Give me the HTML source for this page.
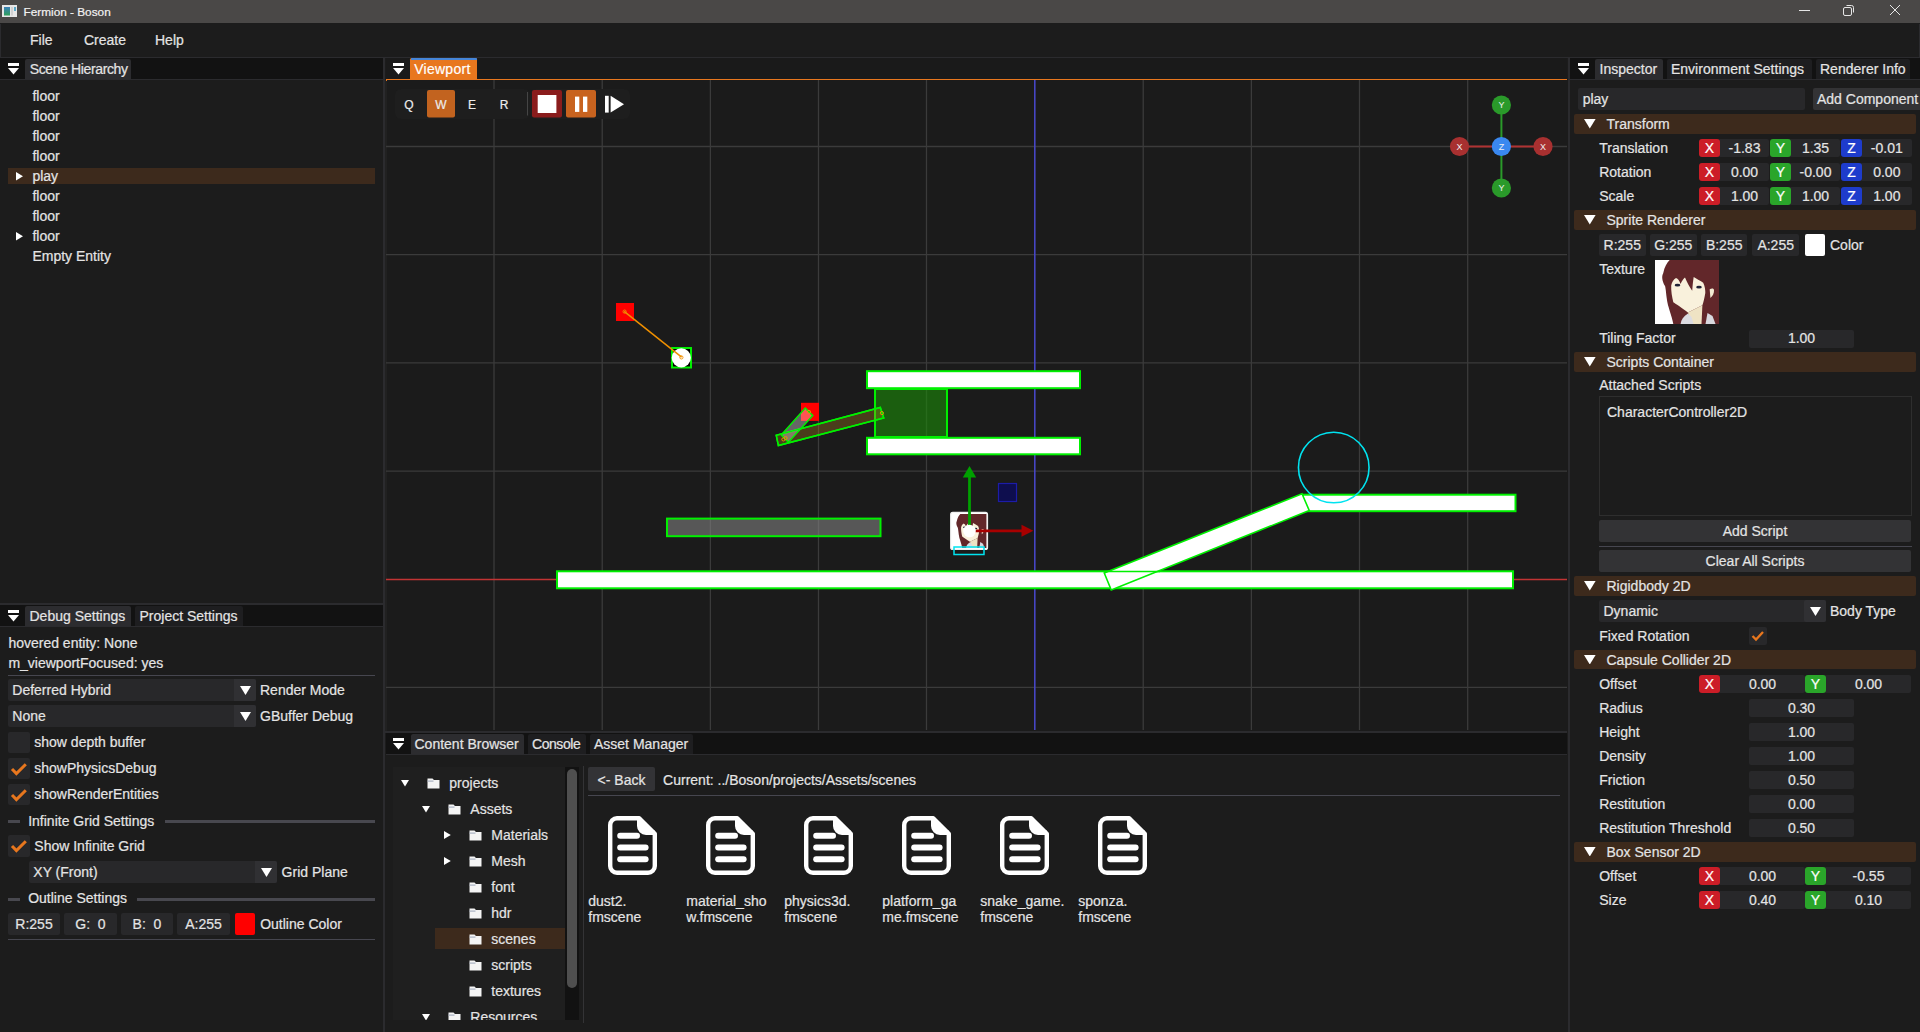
<!DOCTYPE html><html><head><meta charset="utf-8"><style>
html,body{margin:0;padding:0;width:1920px;height:1032px;overflow:hidden;background:#1c1c1c;}
body{position:relative;font-family:"Liberation Sans",sans-serif;font-size:14px;color:#e4e4e4;}
.a{position:absolute;}
.t{position:absolute;white-space:pre;line-height:20px;height:20px;-webkit-text-stroke:0.2px currentColor;}
</style></head><body>

<div class="a" style="left:0px;top:0px;width:1920px;height:23px;background:#4a4847;"></div>
<svg class="a" style="left:2px;top:5px" width="15" height="12"><defs><linearGradient id="ig" x1="0" y1="0" x2="0" y2="1"><stop offset="0" stop-color="#3a7fb8"/><stop offset="1" stop-color="#2fa05a"/></linearGradient></defs><rect x="0" y="0" width="15" height="12" fill="#e6e6e6"/><rect x="2" y="2" width="6" height="8.5" fill="url(#ig)"/><rect x="9" y="2" width="2" height="8.5" fill="#d0d0d0"/><rect x="12" y="2" width="2" height="4" fill="#5aa8c8"/></svg>
<div class="t" style="left:23.5px;top:1.81px;font-size:11.8px;color:#f2f2f2;">Fermion - Boson</div>
<div class="a" style="left:1799px;top:10px;width:11px;height:1px;background:#e6e6e6;"></div>
<svg class="a" style="left:1843px;top:4px" width="13" height="13"><rect x="0.5" y="3.5" width="8" height="8" rx="1.5" fill="none" stroke="#e6e6e6" stroke-width="1"/><path d="M3.5,1.5 h5 a2,2 0 0 1 2,2 v5" fill="none" stroke="#e6e6e6" stroke-width="1"/></svg>
<svg class="a" style="left:1889px;top:4px" width="13" height="13"><path d="M1,1 L11,11 M11,1 L1,11" stroke="#e6e6e6" stroke-width="1"/></svg>
<div class="a" style="left:0px;top:23px;width:1920px;height:34px;background:#1c1c1c;"></div>
<div class="t" style="left:30px;top:30.15px;font-size:14px;">File</div>
<div class="t" style="left:84px;top:30.15px;font-size:14px;">Create</div>
<div class="t" style="left:155px;top:30.15px;font-size:14px;">Help</div>
<div class="a" style="left:0px;top:57px;width:1920px;height:1px;background:#2b2b2e;"></div>
<div class="a" style="left:0px;top:23.5px;width:1px;height:34px;background:#2b2b2e;"></div>
<div class="a" style="left:1918.5px;top:23.5px;width:1.5px;height:34px;background:#2b2b2e;"></div>
<div class="a" style="left:383px;top:58px;width:2px;height:974px;background:#2b2b2e;"></div>
<div class="a" style="left:385px;top:80px;width:2px;height:651px;background:#212121;"></div>
<div class="a" style="left:1568px;top:58px;width:2px;height:974px;background:#2b2b2e;"></div>
<div class="a" style="left:0px;top:58px;width:383px;height:21px;background:#121212;"></div>
<svg class="a" style="left:8px;top:63px" width="11" height="12"><rect x="0" y="0" width="11" height="3" fill="#fff"/><polygon points="0,5 11,5 5.5,11.5" fill="#fff"/></svg>
<div class="a" style="left:25px;top:58.5px;width:105.5px;height:20.5px;background:#2c2c2f;border-radius:2px 2px 0 0"></div>
<div class="t" style="left:29.7px;top:59.35px;font-size:14px;letter-spacing:-0.37px;">Scene Hierarchy</div>
<div class="a" style="left:0px;top:79px;width:383px;height:1px;background:#2b2b2e;"></div>
<div class="t" style="left:32.4px;top:86.15px;font-size:14px;">floor</div>
<div class="t" style="left:32.4px;top:106.15px;font-size:14px;">floor</div>
<div class="t" style="left:32.4px;top:126.15px;font-size:14px;">floor</div>
<div class="t" style="left:32.4px;top:146.15px;font-size:14px;">floor</div>
<div class="a" style="left:8px;top:168px;width:367px;height:16px;background:#3d2a1c;"></div>
<svg class="a" style="left:16px;top:172px" width="7" height="8.5"><polygon points="0,0 7,4.25 0,8.5" fill="#fff"/></svg>
<div class="t" style="left:32.4px;top:166.15px;font-size:14px;">play</div>
<div class="t" style="left:32.4px;top:186.15px;font-size:14px;">floor</div>
<div class="t" style="left:32.4px;top:206.15px;font-size:14px;">floor</div>
<svg class="a" style="left:16px;top:232px" width="7" height="8.5"><polygon points="0,0 7,4.25 0,8.5" fill="#fff"/></svg>
<div class="t" style="left:32.4px;top:226.15px;font-size:14px;">floor</div>
<div class="t" style="left:32.4px;top:246.15px;font-size:14px;">Empty Entity</div>
<div class="a" style="left:0px;top:603px;width:383px;height:2px;background:#2b2b2e;"></div>
<div class="a" style="left:0px;top:605px;width:383px;height:21px;background:#121212;"></div>
<svg class="a" style="left:8px;top:610px" width="11" height="12"><rect x="0" y="0" width="11" height="3" fill="#fff"/><polygon points="0,5 11,5 5.5,11.5" fill="#fff"/></svg>
<div class="a" style="left:25px;top:605.5px;width:105.5px;height:20.5px;background:#2c2c2f;border-radius:2px 2px 0 0"></div>
<div class="t" style="left:29.5px;top:606.15px;font-size:14px;">Debug Settings</div>
<div class="a" style="left:135px;top:605.5px;width:107.6px;height:20.5px;background:#1e1e20;border-radius:2px 2px 0 0"></div>
<div class="t" style="left:139.5px;top:606.15px;font-size:14px;">Project Settings</div>
<div class="a" style="left:0px;top:626px;width:383px;height:1px;background:#2b2b2e;"></div>
<div class="t" style="left:8.4px;top:633.15px;font-size:14px;">hovered entity: None</div>
<div class="t" style="left:8.4px;top:653.15px;font-size:14px;">m_viewportFocused: yes</div>
<div class="a" style="left:8px;top:675px;width:367px;height:1px;background:#46464f;"></div>
<div class="a" style="left:8px;top:679px;width:248px;height:21.5px;background:#28282a;border-radius:2px"></div>
<div class="a" style="left:234px;top:679px;width:22px;height:21.5px;background:#303033;border-radius:0 2px 2px 0"></div>
<svg class="a" style="left:239.5px;top:685.5px" width="11" height="9"><polygon points="0,0 11,0 5.5,9" fill="#fff"/></svg>
<div class="t" style="left:12.3px;top:680.15px;font-size:14px;">Deferred Hybrid</div>
<div class="t" style="left:260px;top:680.15px;font-size:14px;">Render Mode</div>
<div class="a" style="left:8px;top:705.3px;width:248px;height:21.5px;background:#28282a;border-radius:2px"></div>
<div class="a" style="left:234px;top:705.3px;width:22px;height:21.5px;background:#303033;border-radius:0 2px 2px 0"></div>
<svg class="a" style="left:239.5px;top:711.8px" width="11" height="9"><polygon points="0,0 11,0 5.5,9" fill="#fff"/></svg>
<div class="t" style="left:12.3px;top:706.45px;font-size:14px;">None</div>
<div class="t" style="left:260px;top:706.15px;font-size:14px;">GBuffer Debug</div>
<div class="a" style="left:8px;top:731.5px;width:22px;height:21.5px;background:#28282a;border-radius:2px"></div>
<div class="t" style="left:34.3px;top:732.15px;font-size:14px;">show depth buffer</div>
<div class="a" style="left:8px;top:757.5px;width:22px;height:21.5px;background:#28282a;border-radius:2px"></div>
<svg class="a" style="left:8px;top:757.5px" width="22" height="22"><polyline points="4,11 8.4,15.6 17.8,6.2" fill="none" stroke="#e8771e" stroke-width="3"/></svg>
<div class="t" style="left:34.3px;top:758.15px;font-size:14px;">showPhysicsDebug</div>
<div class="a" style="left:8px;top:783.5px;width:22px;height:21.5px;background:#28282a;border-radius:2px"></div>
<svg class="a" style="left:8px;top:783.5px" width="22" height="22"><polyline points="4,11 8.4,15.6 17.8,6.2" fill="none" stroke="#e8771e" stroke-width="3"/></svg>
<div class="t" style="left:34.3px;top:784.15px;font-size:14px;">showRenderEntities</div>
<div class="a" style="left:8px;top:820.0px;width:12px;height:3px;background:#48484f;"></div>
<div class="t" style="left:28.2px;top:810.65px;font-size:14px;">Infinite Grid Settings</div>
<div class="a" style="left:165px;top:820.0px;width:210px;height:3px;background:#48484f;"></div>
<div class="a" style="left:8px;top:835px;width:22px;height:21.5px;background:#28282a;border-radius:2px"></div>
<svg class="a" style="left:8px;top:835px" width="22" height="22"><polyline points="4,11 8.4,15.6 17.8,6.2" fill="none" stroke="#e8771e" stroke-width="3"/></svg>
<div class="t" style="left:34.3px;top:836.15px;font-size:14px;">Show Infinite Grid</div>
<div class="a" style="left:29px;top:861px;width:248px;height:21.5px;background:#28282a;border-radius:2px"></div>
<div class="a" style="left:255px;top:861px;width:22px;height:21.5px;background:#303033;border-radius:0 2px 2px 0"></div>
<svg class="a" style="left:260.5px;top:867.5px" width="11" height="9"><polygon points="0,0 11,0 5.5,9" fill="#fff"/></svg>
<div class="t" style="left:33.3px;top:862.15px;font-size:14px;">XY (Front)</div>
<div class="t" style="left:281.6px;top:862.15px;font-size:14px;">Grid Plane</div>
<div class="a" style="left:8px;top:897.5px;width:12px;height:3px;background:#48484f;"></div>
<div class="t" style="left:28.2px;top:888.15px;font-size:14px;">Outline Settings</div>
<div class="a" style="left:137px;top:897.5px;width:238px;height:3px;background:#48484f;"></div>
<div class="a" style="left:8px;top:913px;width:52px;height:21.5px;background:#28282a;border-radius:2px"></div>
<div class="t" style="left:-166.0px;width:400px;text-align:center;top:914.15px;font-size:14px;">R:255</div>
<div class="a" style="left:64px;top:913px;width:53px;height:21.5px;background:#28282a;border-radius:2px"></div>
<div class="t" style="left:-109.5px;width:400px;text-align:center;top:914.15px;font-size:14px;">G:  0</div>
<div class="a" style="left:121px;top:913px;width:52px;height:21.5px;background:#28282a;border-radius:2px"></div>
<div class="t" style="left:-53.0px;width:400px;text-align:center;top:914.15px;font-size:14px;">B:  0</div>
<div class="a" style="left:177px;top:913px;width:53px;height:21.5px;background:#28282a;border-radius:2px"></div>
<div class="t" style="left:3.5px;width:400px;text-align:center;top:914.15px;font-size:14px;">A:255</div>
<div class="a" style="left:235px;top:913px;width:20px;height:21.5px;background:#ff0000;border-radius:2px"></div>
<div class="t" style="left:260.2px;top:914.15px;font-size:14px;">Outline Color</div>
<div class="a" style="left:8px;top:939px;width:367px;height:1px;background:#46464f;"></div>
<div class="a" style="left:386px;top:58px;width:1181px;height:21px;background:#1a1a1a;"></div>
<svg class="a" style="left:393px;top:63px" width="11" height="12"><rect x="0" y="0" width="11" height="3" fill="#fff"/><polygon points="0,5 11,5 5.5,11.5" fill="#fff"/></svg>
<div class="a" style="left:410px;top:58px;width:67px;height:21.5px;background:#e8771e;border-radius:1.5px 1.5px 0 0"></div>
<div class="a" style="left:410.5px;top:58px;width:66px;height:1.6px;background:#4585d8;border-radius:1px 1px 0 0"></div>
<div class="t" style="left:414.2px;top:59.35px;font-size:14px;color:#fff;letter-spacing:0.27px;">Viewport</div>
<div class="a" style="left:386px;top:79px;width:1181px;height:1.5px;background:#e8771e;"></div>
<div class="a" style="left:387px;top:80px;width:1181px;height:651px;background:#1b1b1b;"></div>
<svg class="a" style="left:386px;top:80px" width="1181" height="650" viewBox="386 80 1181 650"><line x1="494" y1="80" x2="494" y2="730" stroke="#3b3b3b" stroke-width="1.3"/><line x1="602.2" y1="80" x2="602.2" y2="730" stroke="#3b3b3b" stroke-width="1.3"/><line x1="710.4" y1="80" x2="710.4" y2="730" stroke="#3b3b3b" stroke-width="1.3"/><line x1="818.5" y1="80" x2="818.5" y2="730" stroke="#3b3b3b" stroke-width="1.3"/><line x1="926.5" y1="80" x2="926.5" y2="730" stroke="#3b3b3b" stroke-width="1.3"/><line x1="1143.2" y1="80" x2="1143.2" y2="730" stroke="#3b3b3b" stroke-width="1.3"/><line x1="1251.4" y1="80" x2="1251.4" y2="730" stroke="#3b3b3b" stroke-width="1.3"/><line x1="1359.5" y1="80" x2="1359.5" y2="730" stroke="#3b3b3b" stroke-width="1.3"/><line x1="1467.7" y1="80" x2="1467.7" y2="730" stroke="#3b3b3b" stroke-width="1.3"/><line x1="386" y1="146.5" x2="1567" y2="146.5" stroke="#3b3b3b" stroke-width="1.3"/><line x1="386" y1="254.7" x2="1567" y2="254.7" stroke="#3b3b3b" stroke-width="1.3"/><line x1="386" y1="362.9" x2="1567" y2="362.9" stroke="#3b3b3b" stroke-width="1.3"/><line x1="386" y1="471.1" x2="1567" y2="471.1" stroke="#3b3b3b" stroke-width="1.3"/><line x1="386" y1="687.4" x2="1567" y2="687.4" stroke="#3b3b3b" stroke-width="1.3"/><line x1="1034.8" y1="80" x2="1034.8" y2="730" stroke="#4646c4" stroke-width="1.6"/><line x1="386" y1="579.5" x2="1567" y2="579.5" stroke="#c23434" stroke-width="1.6"/><rect x="395" y="89" width="135" height="30" rx="6" fill="#1e1e1e"/><rect x="530" y="89" width="100" height="30" rx="6" fill="#1e1e1e"/><rect x="427" y="90" width="28" height="27.5" rx="2" fill="#c2631f"/><line x1="527.5" y1="92" x2="527.5" y2="115.5" stroke="#454545" stroke-width="1"/><rect x="532" y="90" width="30" height="27.5" rx="2" fill="#8a1c1c"/><rect x="537.7" y="95" width="18.7" height="18" fill="#fff"/><rect x="566" y="90" width="30" height="27.5" rx="2" fill="#c8631f"/><rect x="575" y="96.6" width="4.3" height="15.3" fill="#fff"/><rect x="583" y="96.6" width="4.3" height="15.3" fill="#fff"/><rect x="605" y="95.8" width="3.7" height="16.8" fill="#fff"/><polygon points="610.6,95.8 624,104.2 610.6,112.6" fill="#fff"/><rect x="616" y="303" width="18" height="18" fill="#ff0000"/><rect x="672" y="348" width="19" height="19.5" fill="#000" stroke="#00f000" stroke-width="2"/><circle cx="681.3" cy="357.8" r="9.6" fill="#fff"/><line x1="624.1" y1="311.4" x2="681.6" y2="357.1" stroke="#f09000" stroke-width="1.5"/><rect x="875" y="389" width="72" height="48" fill="rgba(28,140,8,0.6)" stroke="#00f000" stroke-width="2"/><rect x="867" y="371.2" width="213" height="17" fill="#fff" stroke="#00f000" stroke-width="2"/><rect x="867" y="437.8" width="213" height="16.5" fill="#fff" stroke="#00f000" stroke-width="2"/><rect x="801" y="402.8" width="18" height="18.1" fill="#ff0000"/><polygon points="776.25,435.3 778.4,445.6 883.75,418.1 880.3,407.5" fill="rgba(170,132,28,0.33)" stroke="#00f000" stroke-width="1.5"/><polygon points="781.25,435 788.4,442.2 812.8,415.6 805.3,408.1" fill="rgba(255,255,255,0.33)" stroke="#00f000" stroke-width="1.5"/><polygon points="776.25,435.3 778.4,445.6 883.75,418.1 880.3,407.5" fill="none" stroke="#00f000" stroke-width="1.5"/><rect x="667" y="518.6" width="213.5" height="17.6" fill="rgba(128,128,128,0.6)" stroke="#00f000" stroke-width="2"/><circle cx="809" cy="411.9" r="1.6" fill="none" stroke="#f09000" stroke-width="0.9"/><circle cx="881.9" cy="413.1" r="1.6" fill="none" stroke="#f09000" stroke-width="0.9"/><circle cx="785.6" cy="438.1" r="1.6" fill="none" stroke="#f09000" stroke-width="0.9"/><circle cx="783.4" cy="439.4" r="1.6" fill="none" stroke="#f09000" stroke-width="0.9"/><circle cx="624.6" cy="311.6" r="1.6" fill="none" stroke="#f09000" stroke-width="0.9"/><circle cx="681.4" cy="357.4" r="1.6" fill="none" stroke="#f09000" stroke-width="0.9"/><rect x="557" y="571.3" width="956" height="17" fill="#fff" stroke="#00f000" stroke-width="2"/><rect x="1303" y="494.7" width="212.5" height="16.5" fill="#fff" stroke="#00f000" stroke-width="2"/><polygon points="1104.25,573 1111.25,590 1309.25,510.5 1302,493.75" fill="#fff" stroke="#00f000" stroke-width="1.6"/><line x1="1104.5" y1="571.5" x2="1160" y2="571.5" stroke="#00f000" stroke-width="1.6"/><circle cx="1333.75" cy="467.5" r="35.3" fill="none" stroke="#00e3f0" stroke-width="1.6"/><rect x="998.5" y="483.5" width="18" height="18" fill="#0e0e4e" stroke="#1c1ca8" stroke-width="1.2"/><rect x="950.7" y="512.4" width="36.8" height="37" rx="2" fill="#fff" stroke="#f0f0f0" stroke-width="1.2"/><g transform="translate(952.5,514) scale(0.53)"><rect width="64" height="64" fill="#ffffff"/><path d="M14.7,0 H64 V64 H18.3 C17,56 12.5,46 11.8,38.7 C11,32 10.7,28 10,26 C7,21 6.5,16 8.2,13.2 C9.5,7 12,2.5 14.7,0 Z" fill="#62272a"/><path d="M16.2,25.6 C17,22 18.5,19.5 21,18 C23,18.5 24.5,21 25.5,24 C27,21 28.5,18.5 30,17.5 C32,22 34.5,27 37.2,30.7 C37.6,26 38,21 38.7,17 C42,19 45.5,21 48.2,22.7 C49.8,26 50.5,30 50.3,33 C49.5,38 48.5,42 47.4,45.2 L32.9,52.5 C27,48 21,44 18.3,42.3 C17,37 16,31 16.2,25.6 Z" fill="#f9f1dc"/><path d="M32.9,52.5 L47.4,45.2 L46.5,64 L37,64 Z" fill="#efe3c4"/><path d="M25.6,64 C26,59.5 28.5,56.5 33,53.5 L36.5,57 L38.5,64 Z" fill="#dcdce2"/><path d="M52.5,53 L57.5,56 L60.5,64 L50.5,64 Z" fill="#d8d8de"/><path d="M54.7,29.2 C57,28 59,28.3 59,30.5 C59,33 58,36 55.4,38 Z" fill="#f3ead2"/><ellipse cx="22.5" cy="25.2" rx="2.8" ry="1.4" fill="#1e2236"/><ellipse cx="44" cy="27.2" rx="2.8" ry="1.4" fill="#1e2236"/></g><rect x="954" y="547" width="30" height="7.5" fill="none" stroke="#00e3f0" stroke-width="1.5"/><line x1="969.5" y1="476" x2="969.5" y2="530" stroke="#00a000" stroke-width="2.8"/><polygon points="962.8,477.5 976.2,477.5 969.5,466" fill="#00a000"/><line x1="972" y1="530.8" x2="1023" y2="530.8" stroke="#a80000" stroke-width="2.8"/><polygon points="1021.5,524.8 1021.5,536.8 1033.4,530.8" fill="#a80000"/><circle cx="969.5" cy="531" r="6.3" fill="#fff"/><line x1="1501.4" y1="105" x2="1501.4" y2="188" stroke="#2a9a2a" stroke-width="2"/><line x1="1459.5" y1="146.5" x2="1543" y2="146.5" stroke="#b03232" stroke-width="2"/><circle cx="1501.4" cy="105" r="9.6" fill="#2a9a2a"/><text x="1501.4" y="108.3" font-size="9" text-anchor="middle" fill="#f0f0f0" font-family="Liberation Sans">Y</text><circle cx="1501.4" cy="188" r="9.6" fill="#2a9a2a"/><text x="1501.4" y="191.3" font-size="9" text-anchor="middle" fill="#f0f0f0" font-family="Liberation Sans">Y</text><circle cx="1459.5" cy="146.5" r="9.6" fill="#a83030"/><text x="1459.5" y="149.8" font-size="9" text-anchor="middle" fill="#f0f0f0" font-family="Liberation Sans">X</text><circle cx="1543" cy="146.5" r="9.6" fill="#a83030"/><text x="1543" y="149.8" font-size="9" text-anchor="middle" fill="#f0f0f0" font-family="Liberation Sans">X</text><circle cx="1501.4" cy="146.5" r="9.6" fill="#3a88f0"/><text x="1501.4" y="149.8" font-size="9" text-anchor="middle" fill="#f0f0f0" font-family="Liberation Sans">Z</text></svg>
<div class="t" style="left:209px;width:400px;text-align:center;top:94.54px;font-size:12px;color:#ececec;">Q</div>
<div class="t" style="left:241px;width:400px;text-align:center;top:94.54px;font-size:12px;color:#ececec;">W</div>
<div class="t" style="left:272px;width:400px;text-align:center;top:94.54px;font-size:12px;color:#ececec;">E</div>
<div class="t" style="left:304px;width:400px;text-align:center;top:94.54px;font-size:12px;color:#ececec;">R</div>
<div class="a" style="left:383px;top:731px;width:1184px;height:2px;background:#2b2b2e;"></div>
<div class="a" style="left:386px;top:733px;width:1181px;height:21px;background:#121212;"></div>
<svg class="a" style="left:393px;top:738px" width="11" height="12"><rect x="0" y="0" width="11" height="3" fill="#fff"/><polygon points="0,5 11,5 5.5,11.5" fill="#fff"/></svg>
<div class="a" style="left:410.5px;top:733.5px;width:113.5px;height:20.5px;background:#2c2c2f;border-radius:2px 2px 0 0"></div>
<div class="t" style="left:414.5px;top:734.15px;font-size:14px;">Content Browser</div>
<div class="a" style="left:528px;top:733.5px;width:58px;height:20.5px;background:#1e1e20;border-radius:2px 2px 0 0"></div>
<div class="t" style="left:532px;top:734.15px;font-size:14px;letter-spacing:-0.44px;">Console</div>
<div class="a" style="left:590px;top:733.5px;width:102.60000000000002px;height:20.5px;background:#1e1e20;border-radius:2px 2px 0 0"></div>
<div class="t" style="left:594px;top:734.15px;font-size:14px;">Asset Manager</div>
<div class="a" style="left:386px;top:754px;width:1181px;height:1px;background:#2b2b2e;"></div>
<div class="a" style="left:392.5px;top:767px;width:186.5px;height:253px;background:#1f1f1f;overflow:hidden">
<div class="a" style="left:42.5px;top:161.20000000000005px;width:129.5px;height:21.2px;background:#3d2a1c;"></div>
<svg class="a" style="left:8.75px;top:12.799999999999955px" width="8" height="7"><polygon points="0,0 8,0 4,6.5" fill="#fff"/></svg>
<svg class="a" style="left:34.19999999999999px;top:10.799999999999955px" width="13" height="11"><path d="M0.5,0.5 h5 l1.5,1.5 h5.5 v8.5 h-12 z" fill="#f4f4f4"/><rect x="0.5" y="2.5" width="6" height="1.2" fill="#a9b1c2"/></svg>
<div class="t" style="left:56.80000000000001px;top:5.95px">projects</div>
<svg class="a" style="left:29.75px;top:38.799999999999955px" width="8" height="7"><polygon points="0,0 8,0 4,6.5" fill="#fff"/></svg>
<svg class="a" style="left:55.19999999999999px;top:36.799999999999955px" width="13" height="11"><path d="M0.5,0.5 h5 l1.5,1.5 h5.5 v8.5 h-12 z" fill="#f4f4f4"/><rect x="0.5" y="2.5" width="6" height="1.2" fill="#a9b1c2"/></svg>
<div class="t" style="left:77.80000000000001px;top:31.95px">Assets</div>
<svg class="a" style="left:51.25px;top:64.29999999999995px" width="7" height="8"><polygon points="0,0 6.8,4 0,8" fill="#fff"/></svg>
<svg class="a" style="left:76.19999999999999px;top:62.799999999999955px" width="13" height="11"><path d="M0.5,0.5 h5 l1.5,1.5 h5.5 v8.5 h-12 z" fill="#f4f4f4"/><rect x="0.5" y="2.5" width="6" height="1.2" fill="#a9b1c2"/></svg>
<div class="t" style="left:98.80000000000001px;top:57.95px">Materials</div>
<svg class="a" style="left:51.25px;top:90.29999999999995px" width="7" height="8"><polygon points="0,0 6.8,4 0,8" fill="#fff"/></svg>
<svg class="a" style="left:76.19999999999999px;top:88.79999999999995px" width="13" height="11"><path d="M0.5,0.5 h5 l1.5,1.5 h5.5 v8.5 h-12 z" fill="#f4f4f4"/><rect x="0.5" y="2.5" width="6" height="1.2" fill="#a9b1c2"/></svg>
<div class="t" style="left:98.80000000000001px;top:83.95px">Mesh</div>
<svg class="a" style="left:76.19999999999999px;top:114.79999999999995px" width="13" height="11"><path d="M0.5,0.5 h5 l1.5,1.5 h5.5 v8.5 h-12 z" fill="#f4f4f4"/><rect x="0.5" y="2.5" width="6" height="1.2" fill="#a9b1c2"/></svg>
<div class="t" style="left:98.80000000000001px;top:109.95px">font</div>
<svg class="a" style="left:76.19999999999999px;top:140.79999999999995px" width="13" height="11"><path d="M0.5,0.5 h5 l1.5,1.5 h5.5 v8.5 h-12 z" fill="#f4f4f4"/><rect x="0.5" y="2.5" width="6" height="1.2" fill="#a9b1c2"/></svg>
<div class="t" style="left:98.80000000000001px;top:135.95px">hdr</div>
<svg class="a" style="left:76.19999999999999px;top:166.79999999999995px" width="13" height="11"><path d="M0.5,0.5 h5 l1.5,1.5 h5.5 v8.5 h-12 z" fill="#f4f4f4"/><rect x="0.5" y="2.5" width="6" height="1.2" fill="#a9b1c2"/></svg>
<div class="t" style="left:98.80000000000001px;top:161.95px">scenes</div>
<svg class="a" style="left:76.19999999999999px;top:192.79999999999995px" width="13" height="11"><path d="M0.5,0.5 h5 l1.5,1.5 h5.5 v8.5 h-12 z" fill="#f4f4f4"/><rect x="0.5" y="2.5" width="6" height="1.2" fill="#a9b1c2"/></svg>
<div class="t" style="left:98.80000000000001px;top:187.95px">scripts</div>
<svg class="a" style="left:76.19999999999999px;top:218.79999999999995px" width="13" height="11"><path d="M0.5,0.5 h5 l1.5,1.5 h5.5 v8.5 h-12 z" fill="#f4f4f4"/><rect x="0.5" y="2.5" width="6" height="1.2" fill="#a9b1c2"/></svg>
<div class="t" style="left:98.80000000000001px;top:213.95px">textures</div>
<svg class="a" style="left:29.75px;top:246.79999999999995px" width="8" height="7"><polygon points="0,0 8,0 4,6.5" fill="#fff"/></svg>
<svg class="a" style="left:55.19999999999999px;top:244.79999999999995px" width="13" height="11"><path d="M0.5,0.5 h5 l1.5,1.5 h5.5 v8.5 h-12 z" fill="#f4f4f4"/><rect x="0.5" y="2.5" width="6" height="1.2" fill="#a9b1c2"/></svg>
<div class="t" style="left:77.80000000000001px;top:239.95px">Resources</div>
<div class="a" style="left:172.5px;top:0px;width:14px;height:253px;background:#121212"></div>
<div class="a" style="left:174.5px;top:2.2px;width:10px;height:218.8px;background:#4f4f4f;border-radius:5px"></div>
</div>
<div class="a" style="left:583px;top:766px;width:1px;height:257px;background:#333335;"></div>
<div class="a" style="left:588px;top:767px;width:67px;height:23.7px;background:#333336;border-radius:2px"></div>
<div class="t" style="left:421.5px;width:400px;text-align:center;top:769.65px;font-size:14px;">&lt;- Back</div>
<div class="t" style="left:663.1px;top:769.65px;font-size:14px;">Current: ../Boson/projects/Assets/scenes</div>
<div class="a" style="left:588px;top:795px;width:972px;height:1px;background:#46464f;"></div>
<svg class="a" style="left:607.7px;top:816.4px" width="49" height="59" viewBox="0 0 49 59"><path d="M9,2.2 H31.2 L46.8,17.8 V50 A6.8,6.8 0 0 1 40,56.8 H9 A6.8,6.8 0 0 1 2.2,50 V9 A6.8,6.8 0 0 1 9,2.2 Z" fill="none" stroke="#fff" stroke-width="4.4" stroke-linejoin="round"/><path d="M31.2,2.2 V10 A6.8,6.8 0 0 0 38,16.8 H46.8" fill="none" stroke="#fff" stroke-width="4.4"/><path d="M31,2 L47,18 L38,18 A7,7 0 0 1 31,11 Z" fill="#fff"/><line x1="12.2" y1="19.8" x2="29" y2="19.8" stroke="#fff" stroke-width="6" stroke-linecap="round"/><line x1="12.2" y1="31.6" x2="37.6" y2="31.6" stroke="#fff" stroke-width="6" stroke-linecap="round"/><line x1="12.2" y1="43.2" x2="37.6" y2="43.2" stroke="#fff" stroke-width="6" stroke-linecap="round"/></svg>
<div class="t" style="left:588.3px;top:891.15px;font-size:14px;">dust2.</div>
<div class="t" style="left:588.3px;top:907.15px;font-size:14px;">fmscene</div>
<svg class="a" style="left:705.7px;top:816.4px" width="49" height="59" viewBox="0 0 49 59"><path d="M9,2.2 H31.2 L46.8,17.8 V50 A6.8,6.8 0 0 1 40,56.8 H9 A6.8,6.8 0 0 1 2.2,50 V9 A6.8,6.8 0 0 1 9,2.2 Z" fill="none" stroke="#fff" stroke-width="4.4" stroke-linejoin="round"/><path d="M31.2,2.2 V10 A6.8,6.8 0 0 0 38,16.8 H46.8" fill="none" stroke="#fff" stroke-width="4.4"/><path d="M31,2 L47,18 L38,18 A7,7 0 0 1 31,11 Z" fill="#fff"/><line x1="12.2" y1="19.8" x2="29" y2="19.8" stroke="#fff" stroke-width="6" stroke-linecap="round"/><line x1="12.2" y1="31.6" x2="37.6" y2="31.6" stroke="#fff" stroke-width="6" stroke-linecap="round"/><line x1="12.2" y1="43.2" x2="37.6" y2="43.2" stroke="#fff" stroke-width="6" stroke-linecap="round"/></svg>
<div class="t" style="left:686.3px;top:891.15px;font-size:14px;">material_sho</div>
<div class="t" style="left:686.3px;top:907.15px;font-size:14px;">w.fmscene</div>
<svg class="a" style="left:803.7px;top:816.4px" width="49" height="59" viewBox="0 0 49 59"><path d="M9,2.2 H31.2 L46.8,17.8 V50 A6.8,6.8 0 0 1 40,56.8 H9 A6.8,6.8 0 0 1 2.2,50 V9 A6.8,6.8 0 0 1 9,2.2 Z" fill="none" stroke="#fff" stroke-width="4.4" stroke-linejoin="round"/><path d="M31.2,2.2 V10 A6.8,6.8 0 0 0 38,16.8 H46.8" fill="none" stroke="#fff" stroke-width="4.4"/><path d="M31,2 L47,18 L38,18 A7,7 0 0 1 31,11 Z" fill="#fff"/><line x1="12.2" y1="19.8" x2="29" y2="19.8" stroke="#fff" stroke-width="6" stroke-linecap="round"/><line x1="12.2" y1="31.6" x2="37.6" y2="31.6" stroke="#fff" stroke-width="6" stroke-linecap="round"/><line x1="12.2" y1="43.2" x2="37.6" y2="43.2" stroke="#fff" stroke-width="6" stroke-linecap="round"/></svg>
<div class="t" style="left:784.3px;top:891.15px;font-size:14px;">physics3d.</div>
<div class="t" style="left:784.3px;top:907.15px;font-size:14px;">fmscene</div>
<svg class="a" style="left:901.7px;top:816.4px" width="49" height="59" viewBox="0 0 49 59"><path d="M9,2.2 H31.2 L46.8,17.8 V50 A6.8,6.8 0 0 1 40,56.8 H9 A6.8,6.8 0 0 1 2.2,50 V9 A6.8,6.8 0 0 1 9,2.2 Z" fill="none" stroke="#fff" stroke-width="4.4" stroke-linejoin="round"/><path d="M31.2,2.2 V10 A6.8,6.8 0 0 0 38,16.8 H46.8" fill="none" stroke="#fff" stroke-width="4.4"/><path d="M31,2 L47,18 L38,18 A7,7 0 0 1 31,11 Z" fill="#fff"/><line x1="12.2" y1="19.8" x2="29" y2="19.8" stroke="#fff" stroke-width="6" stroke-linecap="round"/><line x1="12.2" y1="31.6" x2="37.6" y2="31.6" stroke="#fff" stroke-width="6" stroke-linecap="round"/><line x1="12.2" y1="43.2" x2="37.6" y2="43.2" stroke="#fff" stroke-width="6" stroke-linecap="round"/></svg>
<div class="t" style="left:882.3px;top:891.15px;font-size:14px;">platform_ga</div>
<div class="t" style="left:882.3px;top:907.15px;font-size:14px;">me.fmscene</div>
<svg class="a" style="left:999.7px;top:816.4px" width="49" height="59" viewBox="0 0 49 59"><path d="M9,2.2 H31.2 L46.8,17.8 V50 A6.8,6.8 0 0 1 40,56.8 H9 A6.8,6.8 0 0 1 2.2,50 V9 A6.8,6.8 0 0 1 9,2.2 Z" fill="none" stroke="#fff" stroke-width="4.4" stroke-linejoin="round"/><path d="M31.2,2.2 V10 A6.8,6.8 0 0 0 38,16.8 H46.8" fill="none" stroke="#fff" stroke-width="4.4"/><path d="M31,2 L47,18 L38,18 A7,7 0 0 1 31,11 Z" fill="#fff"/><line x1="12.2" y1="19.8" x2="29" y2="19.8" stroke="#fff" stroke-width="6" stroke-linecap="round"/><line x1="12.2" y1="31.6" x2="37.6" y2="31.6" stroke="#fff" stroke-width="6" stroke-linecap="round"/><line x1="12.2" y1="43.2" x2="37.6" y2="43.2" stroke="#fff" stroke-width="6" stroke-linecap="round"/></svg>
<div class="t" style="left:980.3px;top:891.15px;font-size:14px;">snake_game.</div>
<div class="t" style="left:980.3px;top:907.15px;font-size:14px;">fmscene</div>
<svg class="a" style="left:1097.7px;top:816.4px" width="49" height="59" viewBox="0 0 49 59"><path d="M9,2.2 H31.2 L46.8,17.8 V50 A6.8,6.8 0 0 1 40,56.8 H9 A6.8,6.8 0 0 1 2.2,50 V9 A6.8,6.8 0 0 1 9,2.2 Z" fill="none" stroke="#fff" stroke-width="4.4" stroke-linejoin="round"/><path d="M31.2,2.2 V10 A6.8,6.8 0 0 0 38,16.8 H46.8" fill="none" stroke="#fff" stroke-width="4.4"/><path d="M31,2 L47,18 L38,18 A7,7 0 0 1 31,11 Z" fill="#fff"/><line x1="12.2" y1="19.8" x2="29" y2="19.8" stroke="#fff" stroke-width="6" stroke-linecap="round"/><line x1="12.2" y1="31.6" x2="37.6" y2="31.6" stroke="#fff" stroke-width="6" stroke-linecap="round"/><line x1="12.2" y1="43.2" x2="37.6" y2="43.2" stroke="#fff" stroke-width="6" stroke-linecap="round"/></svg>
<div class="t" style="left:1078.3px;top:891.15px;font-size:14px;">sponza.</div>
<div class="t" style="left:1078.3px;top:907.15px;font-size:14px;">fmscene</div>
<div class="a" style="left:1570px;top:58px;width:350px;height:21px;background:#121212;"></div>
<svg class="a" style="left:1578px;top:63px" width="11" height="12"><rect x="0" y="0" width="11" height="3" fill="#fff"/><polygon points="0,5 11,5 5.5,11.5" fill="#fff"/></svg>
<div class="a" style="left:1595.2px;top:58.5px;width:67.5px;height:20.5px;background:#2c2c2f;border-radius:2px 2px 0 0"></div>
<div class="t" style="left:1599.5px;top:59.35px;font-size:14px;">Inspector</div>
<div class="a" style="left:1667px;top:58.5px;width:144.70000000000005px;height:20.5px;background:#1e1e20;border-radius:2px 2px 0 0"></div>
<div class="t" style="left:1671px;top:59.35px;font-size:14px;">Environment Settings</div>
<div class="a" style="left:1816px;top:58.5px;width:94px;height:20.5px;background:#1e1e20;border-radius:2px 2px 0 0"></div>
<div class="t" style="left:1820px;top:59.35px;font-size:14px;">Renderer Info</div>
<div class="a" style="left:1570px;top:79px;width:350px;height:1px;background:#2b2b2e;"></div>
<div class="a" style="left:1578px;top:88.3px;width:227.00px;height:21.30px;background:#28282a;border-radius:2px"></div>
<div class="t" style="left:1582.7px;top:88.90px;font-size:14px;">play</div>
<div class="a" style="left:1813px;top:88.3px;width:117.00px;height:21.30px;background:#333335;border-radius:2px"></div>
<div class="t" style="left:1817px;top:88.90px;font-size:14px;">Add Component</div>
<div class="a" style="left:1574px;top:114.2px;width:342px;height:19.6px;background:#3d2a1c;border-radius:2px"></div>
<svg class="a" style="left:1584.2px;top:119.0px" width="11.6" height="9.5"><polygon points="0,0 11.6,0 5.8,9.5" fill="#fff"/></svg>
<div class="t" style="left:1606.5px;top:113.95px;font-size:14px;">Transform</div>
<div class="t" style="left:1599.2px;top:138.05px;font-size:14px;">Translation</div>
<div class="a" style="left:1718px;top:139.2px;width:51.00px;height:18.00px;background:#28282a;border-radius:2px"></div>
<div class="a" style="left:1699px;top:139.2px;width:21.00px;height:18.00px;background:#cc1d27;border-radius:3px"></div>
<div class="t" style="left:1509.5px;width:400px;text-align:center;top:137.85px;font-size:14px;color:#fff;">X</div>
<div class="t" style="left:1544.5px;width:400px;text-align:center;top:138.05px;font-size:14px;">-1.83</div>
<div class="a" style="left:1789px;top:139.2px;width:51.00px;height:18.00px;background:#28282a;border-radius:2px"></div>
<div class="a" style="left:1770px;top:139.2px;width:21.00px;height:18.00px;background:#2aa52a;border-radius:3px"></div>
<div class="t" style="left:1580.5px;width:400px;text-align:center;top:137.85px;font-size:14px;color:#fff;">Y</div>
<div class="t" style="left:1615.5px;width:400px;text-align:center;top:138.05px;font-size:14px;">1.35</div>
<div class="a" style="left:1860px;top:139.2px;width:51.60px;height:18.00px;background:#28282a;border-radius:2px"></div>
<div class="a" style="left:1841px;top:139.2px;width:21.00px;height:18.00px;background:#1e3ccc;border-radius:3px"></div>
<div class="t" style="left:1651.5px;width:400px;text-align:center;top:137.85px;font-size:14px;color:#fff;">Z</div>
<div class="t" style="left:1686.8px;width:400px;text-align:center;top:138.05px;font-size:14px;">-0.01</div>
<div class="t" style="left:1599.2px;top:162.05px;font-size:14px;">Rotation</div>
<div class="a" style="left:1718px;top:163.2px;width:51.00px;height:18.00px;background:#28282a;border-radius:2px"></div>
<div class="a" style="left:1699px;top:163.2px;width:21.00px;height:18.00px;background:#cc1d27;border-radius:3px"></div>
<div class="t" style="left:1509.5px;width:400px;text-align:center;top:161.85px;font-size:14px;color:#fff;">X</div>
<div class="t" style="left:1544.5px;width:400px;text-align:center;top:162.05px;font-size:14px;">0.00</div>
<div class="a" style="left:1789px;top:163.2px;width:51.00px;height:18.00px;background:#28282a;border-radius:2px"></div>
<div class="a" style="left:1770px;top:163.2px;width:21.00px;height:18.00px;background:#2aa52a;border-radius:3px"></div>
<div class="t" style="left:1580.5px;width:400px;text-align:center;top:161.85px;font-size:14px;color:#fff;">Y</div>
<div class="t" style="left:1615.5px;width:400px;text-align:center;top:162.05px;font-size:14px;">-0.00</div>
<div class="a" style="left:1860px;top:163.2px;width:51.60px;height:18.00px;background:#28282a;border-radius:2px"></div>
<div class="a" style="left:1841px;top:163.2px;width:21.00px;height:18.00px;background:#1e3ccc;border-radius:3px"></div>
<div class="t" style="left:1651.5px;width:400px;text-align:center;top:161.85px;font-size:14px;color:#fff;">Z</div>
<div class="t" style="left:1686.8px;width:400px;text-align:center;top:162.05px;font-size:14px;">0.00</div>
<div class="t" style="left:1599.2px;top:186.05px;font-size:14px;">Scale</div>
<div class="a" style="left:1718px;top:187.2px;width:51.00px;height:18.00px;background:#28282a;border-radius:2px"></div>
<div class="a" style="left:1699px;top:187.2px;width:21.00px;height:18.00px;background:#cc1d27;border-radius:3px"></div>
<div class="t" style="left:1509.5px;width:400px;text-align:center;top:185.85px;font-size:14px;color:#fff;">X</div>
<div class="t" style="left:1544.5px;width:400px;text-align:center;top:186.05px;font-size:14px;">1.00</div>
<div class="a" style="left:1789px;top:187.2px;width:51.00px;height:18.00px;background:#28282a;border-radius:2px"></div>
<div class="a" style="left:1770px;top:187.2px;width:21.00px;height:18.00px;background:#2aa52a;border-radius:3px"></div>
<div class="t" style="left:1580.5px;width:400px;text-align:center;top:185.85px;font-size:14px;color:#fff;">Y</div>
<div class="t" style="left:1615.5px;width:400px;text-align:center;top:186.05px;font-size:14px;">1.00</div>
<div class="a" style="left:1860px;top:187.2px;width:51.60px;height:18.00px;background:#28282a;border-radius:2px"></div>
<div class="a" style="left:1841px;top:187.2px;width:21.00px;height:18.00px;background:#1e3ccc;border-radius:3px"></div>
<div class="t" style="left:1651.5px;width:400px;text-align:center;top:185.85px;font-size:14px;color:#fff;">Z</div>
<div class="t" style="left:1686.8px;width:400px;text-align:center;top:186.05px;font-size:14px;">1.00</div>
<div class="a" style="left:1574px;top:210.3px;width:342px;height:19.6px;background:#3d2a1c;border-radius:2px"></div>
<svg class="a" style="left:1584.2px;top:215.10000000000002px" width="11.6" height="9.5"><polygon points="0,0 11.6,0 5.8,9.5" fill="#fff"/></svg>
<div class="t" style="left:1606.5px;top:210.05px;font-size:14px;">Sprite Renderer</div>
<div class="a" style="left:1599px;top:233.8px;width:46.50px;height:21.80px;background:#28282a;border-radius:2px"></div>
<div class="t" style="left:1422.25px;width:400px;text-align:center;top:234.95px;font-size:14px;">R:255</div>
<div class="a" style="left:1650px;top:233.8px;width:46.50px;height:21.80px;background:#28282a;border-radius:2px"></div>
<div class="t" style="left:1473.25px;width:400px;text-align:center;top:234.95px;font-size:14px;">G:255</div>
<div class="a" style="left:1701px;top:233.8px;width:46.40px;height:21.80px;background:#28282a;border-radius:2px"></div>
<div class="t" style="left:1524.2px;width:400px;text-align:center;top:234.95px;font-size:14px;">B:255</div>
<div class="a" style="left:1752px;top:233.8px;width:47.40px;height:21.80px;background:#28282a;border-radius:2px"></div>
<div class="t" style="left:1575.7px;width:400px;text-align:center;top:234.95px;font-size:14px;">A:255</div>
<div class="a" style="left:1805px;top:233.8px;width:20.00px;height:21.80px;background:#ffffff;border-radius:2px"></div>
<div class="t" style="left:1830px;top:234.95px;font-size:14px;">Color</div>
<div class="t" style="left:1599.2px;top:258.95px;font-size:14px;">Texture</div>
<svg class="a" style="left:1655px;top:260px" width="64" height="64" viewBox="0 0 64 64"><rect width="64" height="64" fill="#ffffff"/><path d="M14.7,0 H64 V64 H18.3 C17,56 12.5,46 11.8,38.7 C11,32 10.7,28 10,26 C7,21 6.5,16 8.2,13.2 C9.5,7 12,2.5 14.7,0 Z" fill="#62272a"/><path d="M16.2,25.6 C17,22 18.5,19.5 21,18 C23,18.5 24.5,21 25.5,24 C27,21 28.5,18.5 30,17.5 C32,22 34.5,27 37.2,30.7 C37.6,26 38,21 38.7,17 C42,19 45.5,21 48.2,22.7 C49.8,26 50.5,30 50.3,33 C49.5,38 48.5,42 47.4,45.2 L32.9,52.5 C27,48 21,44 18.3,42.3 C17,37 16,31 16.2,25.6 Z" fill="#f9f1dc"/><path d="M32.9,52.5 L47.4,45.2 L46.5,64 L37,64 Z" fill="#efe3c4"/><path d="M25.6,64 C26,59.5 28.5,56.5 33,53.5 L36.5,57 L38.5,64 Z" fill="#dcdce2"/><path d="M52.5,53 L57.5,56 L60.5,64 L50.5,64 Z" fill="#d8d8de"/><path d="M54.7,29.2 C57,28 59,28.3 59,30.5 C59,33 58,36 55.4,38 Z" fill="#f3ead2"/><ellipse cx="22.5" cy="25.2" rx="2.8" ry="1.4" fill="#1e2236"/><ellipse cx="44" cy="27.2" rx="2.8" ry="1.4" fill="#1e2236"/></svg>
<div class="t" style="left:1599.2px;top:328.35px;font-size:14px;">Tiling Factor</div>
<div class="a" style="left:1749px;top:329.5px;width:105.00px;height:18.00px;background:#28282a;border-radius:2px"></div>
<div class="t" style="left:1601.5px;width:400px;text-align:center;top:328.35px;font-size:14px;">1.00</div>
<div class="a" style="left:1574px;top:352.3px;width:342px;height:19.6px;background:#3d2a1c;border-radius:2px"></div>
<svg class="a" style="left:1584.2px;top:357.1px" width="11.6" height="9.5"><polygon points="0,0 11.6,0 5.8,9.5" fill="#fff"/></svg>
<div class="t" style="left:1606.5px;top:352.05px;font-size:14px;">Scripts Container</div>
<div class="t" style="left:1599.2px;top:374.65px;font-size:14px;">Attached Scripts</div>
<div class="a" style="left:1599.2px;top:396px;width:311px;height:117.5px;border:1px solid #2e2e2e"></div>
<div class="t" style="left:1607px;top:402.15px;font-size:14px;">CharacterController2D</div>
<div class="a" style="left:1599px;top:520px;width:312.00px;height:21.80px;background:#333335;border-radius:2px"></div>
<div class="t" style="left:1555px;width:400px;text-align:center;top:521.15px;font-size:14px;">Add Script</div>
<div class="a" style="left:1599px;top:546px;width:313px;height:1px;background:#46464f;"></div>
<div class="a" style="left:1599px;top:549.8px;width:312.00px;height:22.00px;background:#333335;border-radius:2px"></div>
<div class="t" style="left:1555px;width:400px;text-align:center;top:551.15px;font-size:14px;">Clear All Scripts</div>
<div class="a" style="left:1574px;top:576.2px;width:342px;height:19.6px;background:#3d2a1c;border-radius:2px"></div>
<svg class="a" style="left:1584.2px;top:581.0px" width="11.6" height="9.5"><polygon points="0,0 11.6,0 5.8,9.5" fill="#fff"/></svg>
<div class="t" style="left:1606.5px;top:575.95px;font-size:14px;">Rigidbody 2D</div>
<div class="a" style="left:1599px;top:600.4px;width:226.60px;height:21.50px;background:#28282a;border-radius:2px"></div>
<div class="a" style="left:1804.4px;top:600.4px;width:21.20px;height:21.50px;background:#303033;border-radius:2px"></div>
<svg class="a" style="left:1810px;top:607px" width="11" height="9"><polygon points="0,0 11,0 5.5,9" fill="#fff"/></svg>
<div class="t" style="left:1603.5px;top:601.45px;font-size:14px;">Dynamic</div>
<div class="t" style="left:1830px;top:601.45px;font-size:14px;">Body Type</div>
<div class="t" style="left:1599.2px;top:626.45px;font-size:14px;">Fixed Rotation</div>
<div class="a" style="left:1749px;top:627.4px;width:18.00px;height:17.30px;background:#28282a;border-radius:2px"></div>
<svg class="a" style="left:1749px;top:627.4px" width="18" height="17.3"><polyline points="3.5,9 7,12.6 14,5" fill="none" stroke="#e8771e" stroke-width="2.3"/></svg>
<div class="a" style="left:1574px;top:649.8px;width:342px;height:19.6px;background:#3d2a1c;border-radius:2px"></div>
<svg class="a" style="left:1584.2px;top:654.5999999999999px" width="11.6" height="9.5"><polygon points="0,0 11.6,0 5.8,9.5" fill="#fff"/></svg>
<div class="t" style="left:1606.5px;top:649.55px;font-size:14px;">Capsule Collider 2D</div>
<div class="t" style="left:1599.2px;top:673.85px;font-size:14px;">Offset</div>
<div class="a" style="left:1718px;top:675px;width:87.00px;height:18.00px;background:#28282a;border-radius:2px"></div>
<div class="a" style="left:1699px;top:675px;width:21.00px;height:18.00px;background:#cc1d27;border-radius:3px"></div>
<div class="t" style="left:1509.5px;width:400px;text-align:center;top:673.65px;font-size:14px;color:#fff;">X</div>
<div class="t" style="left:1562.5px;width:400px;text-align:center;top:673.85px;font-size:14px;">0.00</div>
<div class="a" style="left:1824px;top:675px;width:87.00px;height:18.00px;background:#28282a;border-radius:2px"></div>
<div class="a" style="left:1805px;top:675px;width:21.00px;height:18.00px;background:#2aa52a;border-radius:3px"></div>
<div class="t" style="left:1615.5px;width:400px;text-align:center;top:673.65px;font-size:14px;color:#fff;">Y</div>
<div class="t" style="left:1668.5px;width:400px;text-align:center;top:673.85px;font-size:14px;">0.00</div>
<div class="t" style="left:1599.2px;top:697.85px;font-size:14px;">Radius</div>
<div class="a" style="left:1749px;top:699px;width:105.00px;height:18.00px;background:#28282a;border-radius:2px"></div>
<div class="t" style="left:1601.5px;width:400px;text-align:center;top:697.85px;font-size:14px;">0.30</div>
<div class="t" style="left:1599.2px;top:721.85px;font-size:14px;">Height</div>
<div class="a" style="left:1749px;top:723px;width:105.00px;height:18.00px;background:#28282a;border-radius:2px"></div>
<div class="t" style="left:1601.5px;width:400px;text-align:center;top:721.85px;font-size:14px;">1.00</div>
<div class="t" style="left:1599.2px;top:745.85px;font-size:14px;">Density</div>
<div class="a" style="left:1749px;top:747px;width:105.00px;height:18.00px;background:#28282a;border-radius:2px"></div>
<div class="t" style="left:1601.5px;width:400px;text-align:center;top:745.85px;font-size:14px;">1.00</div>
<div class="t" style="left:1599.2px;top:769.85px;font-size:14px;">Friction</div>
<div class="a" style="left:1749px;top:771px;width:105.00px;height:18.00px;background:#28282a;border-radius:2px"></div>
<div class="t" style="left:1601.5px;width:400px;text-align:center;top:769.85px;font-size:14px;">0.50</div>
<div class="t" style="left:1599.2px;top:793.85px;font-size:14px;">Restitution</div>
<div class="a" style="left:1749px;top:795px;width:105.00px;height:18.00px;background:#28282a;border-radius:2px"></div>
<div class="t" style="left:1601.5px;width:400px;text-align:center;top:793.85px;font-size:14px;">0.00</div>
<div class="t" style="left:1599.2px;top:817.85px;font-size:14px;">Restitution Threshold</div>
<div class="a" style="left:1749px;top:819px;width:105.00px;height:18.00px;background:#28282a;border-radius:2px"></div>
<div class="t" style="left:1601.5px;width:400px;text-align:center;top:817.85px;font-size:14px;">0.50</div>
<div class="a" style="left:1574px;top:842px;width:342px;height:19.6px;background:#3d2a1c;border-radius:2px"></div>
<svg class="a" style="left:1584.2px;top:846.8px" width="11.6" height="9.5"><polygon points="0,0 11.6,0 5.8,9.5" fill="#fff"/></svg>
<div class="t" style="left:1606.5px;top:841.75px;font-size:14px;">Box Sensor 2D</div>
<div class="t" style="left:1599.2px;top:865.85px;font-size:14px;">Offset</div>
<div class="a" style="left:1718px;top:867px;width:87.00px;height:18.00px;background:#28282a;border-radius:2px"></div>
<div class="a" style="left:1699px;top:867px;width:21.00px;height:18.00px;background:#cc1d27;border-radius:3px"></div>
<div class="t" style="left:1509.5px;width:400px;text-align:center;top:865.65px;font-size:14px;color:#fff;">X</div>
<div class="t" style="left:1562.5px;width:400px;text-align:center;top:865.85px;font-size:14px;">0.00</div>
<div class="a" style="left:1824px;top:867px;width:87.00px;height:18.00px;background:#28282a;border-radius:2px"></div>
<div class="a" style="left:1805px;top:867px;width:21.00px;height:18.00px;background:#2aa52a;border-radius:3px"></div>
<div class="t" style="left:1615.5px;width:400px;text-align:center;top:865.65px;font-size:14px;color:#fff;">Y</div>
<div class="t" style="left:1668.5px;width:400px;text-align:center;top:865.85px;font-size:14px;">-0.55</div>
<div class="t" style="left:1599.2px;top:889.85px;font-size:14px;">Size</div>
<div class="a" style="left:1718px;top:891px;width:87.00px;height:18.00px;background:#28282a;border-radius:2px"></div>
<div class="a" style="left:1699px;top:891px;width:21.00px;height:18.00px;background:#cc1d27;border-radius:3px"></div>
<div class="t" style="left:1509.5px;width:400px;text-align:center;top:889.65px;font-size:14px;color:#fff;">X</div>
<div class="t" style="left:1562.5px;width:400px;text-align:center;top:889.85px;font-size:14px;">0.40</div>
<div class="a" style="left:1824px;top:891px;width:87.00px;height:18.00px;background:#28282a;border-radius:2px"></div>
<div class="a" style="left:1805px;top:891px;width:21.00px;height:18.00px;background:#2aa52a;border-radius:3px"></div>
<div class="t" style="left:1615.5px;width:400px;text-align:center;top:889.65px;font-size:14px;color:#fff;">Y</div>
<div class="t" style="left:1668.5px;width:400px;text-align:center;top:889.85px;font-size:14px;">0.10</div>
</body></html>
